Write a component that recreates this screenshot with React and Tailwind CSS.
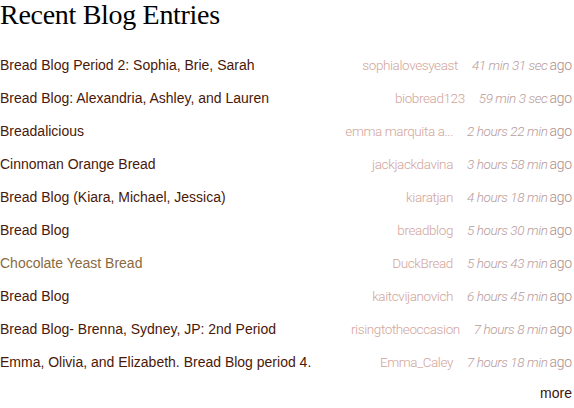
const entries = [
  { title: "Bread Blog Period 2: Sophia, Brie, Sarah", author: "sophialovesyeast", time: "41 min 31 sec" },
  { title: "Bread Blog: Alexandria, Ashley, and Lauren", author: "biobread123", time: "59 min 3 sec" },
  { title: "Breadalicious", author: "emma marquita a...", time: "2 hours 22 min" },
  { title: "Cinnoman Orange Bread", author: "jackjackdavina", time: "3 hours 58 min" },
  { title: "Bread Blog (Kiara, Michael, Jessica)", author: "kiaratjan", time: "4 hours 18 min" },
  { title: "Bread Blog", author: "breadblog", time: "5 hours 30 min" },
  { title: "Chocolate Yeast Bread", author: "DuckBread", time: "5 hours 43 min", visited: true },
  { title: "Bread Blog", author: "kaitcvijanovich", time: "6 hours 45 min" },
  { title: "Bread Blog- Brenna, Sydney, JP: 2nd Period", author: "risingtotheoccasion", time: "7 hours 8 min" },
  { title: "Emma, Olivia, and Elizabeth. Bread Blog period 4.", author: "Emma_Caley", time: "7 hours 18 min" },
];

export default function App() {
  return (
    <div className="w-[574px] h-[408px] bg-white overflow-hidden pr-[2px]">
      <h1 className="font-['Liberation_Serif',serif] text-[28px] leading-[30px] text-black tracking-[-0.3px] h-[49px]">
        Recent Blog Entries
      </h1>
      <ul>
        {entries.map((e, i) => (
          <li key={i} className="flex justify-between items-center h-[33px]">
            <a
              href="#"
              className={
                "font-['Liberation_Sans',Arial,sans-serif] text-[14px] " +
                (e.visited ? "text-[#8a6a3e]" : "text-[#4a1808]")
              }
            >
              {e.title}
            </a>
            <div className="flex items-center font-['Roboto',sans-serif] font-light text-[13.5px]">
              <span className="text-[#d2a59b] mr-[14px] tracking-[-0.4px]">{e.author}</span>
              <span className="italic text-[#b89c9a] mr-[2px] tracking-[-0.4px]">{e.time}</span>
              <span className="text-[#ab8e8c] text-[14px] tracking-[-0.2px]">ago</span>
            </div>
          </li>
        ))}
      </ul>
      <div className="flex justify-end mt-[4px]">
        <a href="#" className="font-['Liberation_Sans',Arial,sans-serif] text-[14px] text-[#3a1408]">
          more
        </a>
      </div>
    </div>
  );
}
